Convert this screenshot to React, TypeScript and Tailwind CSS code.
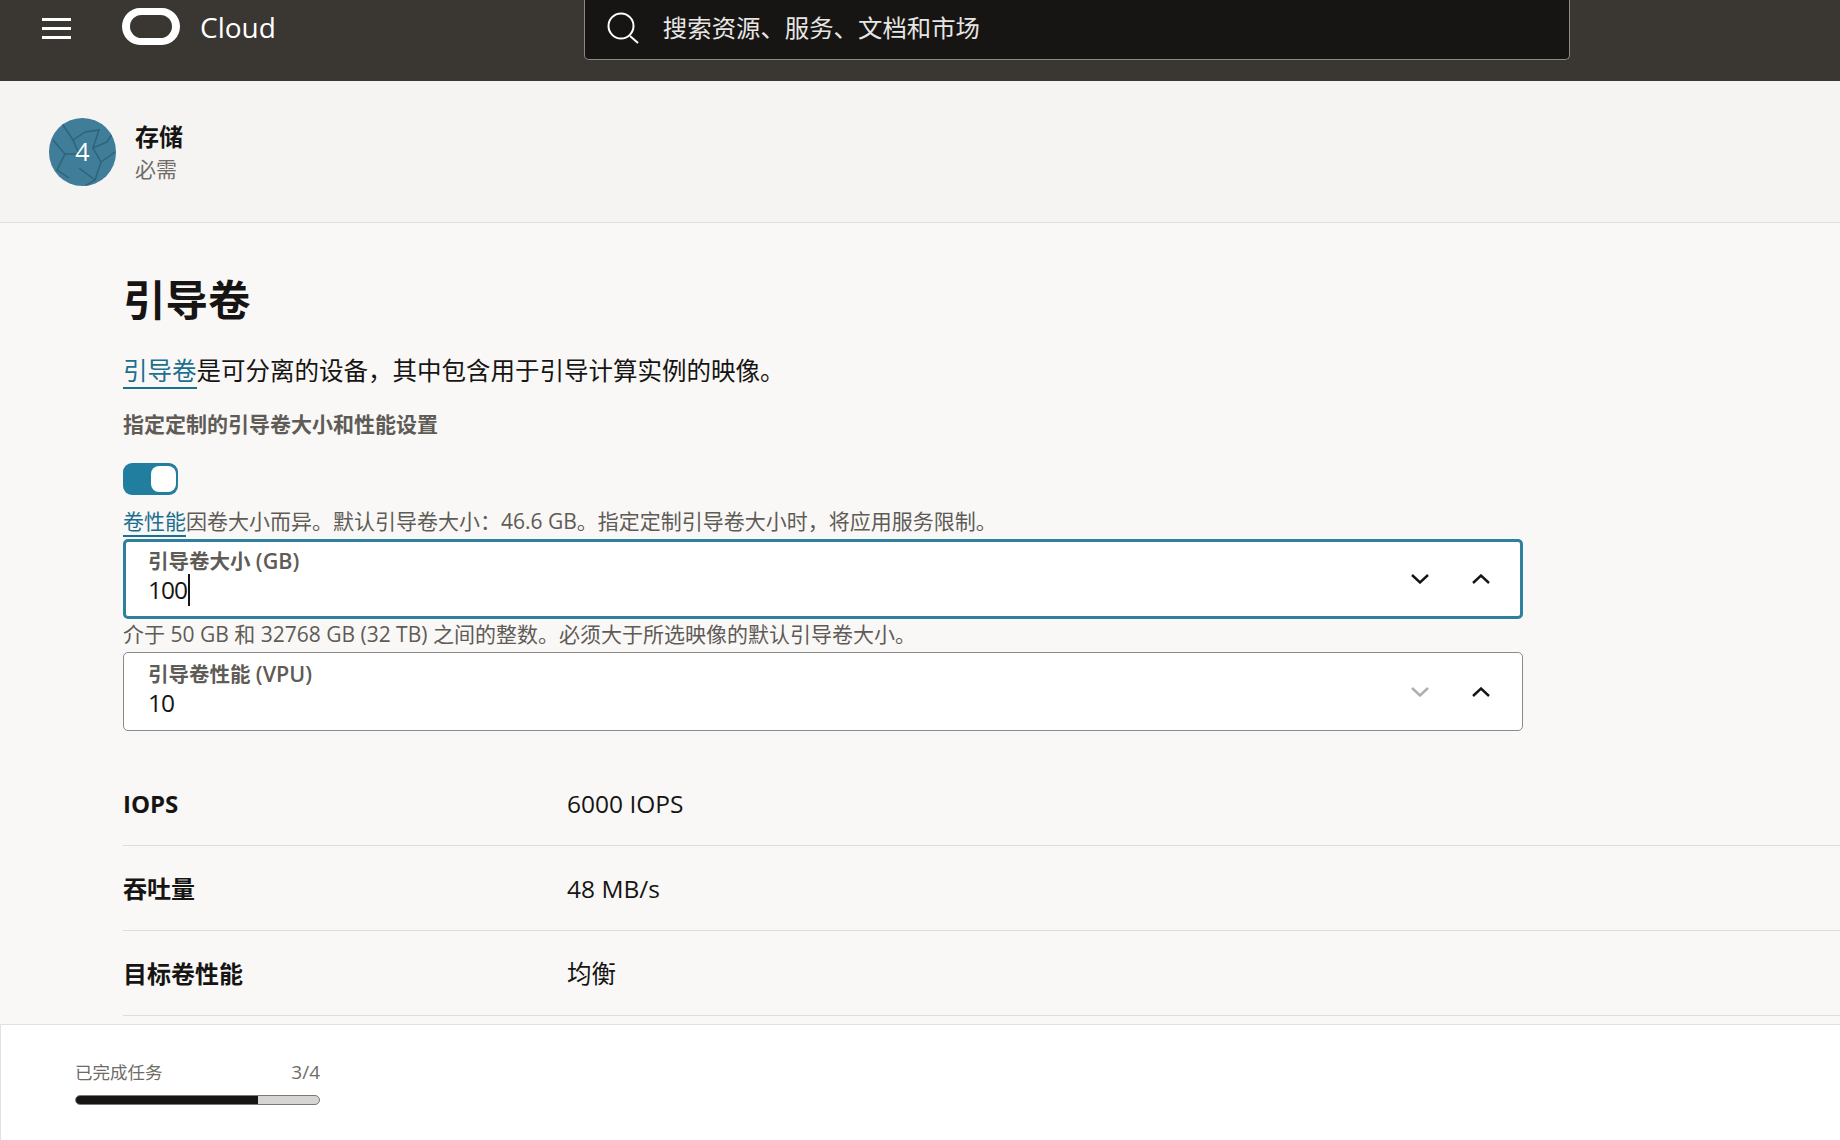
import React from "react";

const fontStack = { fontFamily: '"Open Sans", "Noto Sans CJK SC", sans-serif' };

const Chevron = ({ up = false, muted = false }: { up?: boolean; muted?: boolean }) => (
  <svg width="18" height="10" viewBox="0 0 18 10" fill="none" className={muted ? "text-[#b0aeab]" : "text-[#161513]"}>
    <path d={up ? "M1 9 L9 1.5 L17 9" : "M1 1 L9 8.5 L17 1"} stroke="currentColor" strokeWidth="2.4" />
  </svg>
);

const StepBadge = () => (
  <div className="relative flex h-[68px] w-[67px] shrink-0 items-center justify-center overflow-hidden rounded-full bg-[#3f7d99]">
    <svg className="absolute inset-0" width="67" height="68" viewBox="0 0 67 68" fill="none" stroke="#2f6379" strokeWidth="1.5">
      <path d="M12 4 L24 22 L36 14 L50 12 L44 30 L58 24 L66 12" />
      <path d="M4 22 L16 36 L8 52 L20 60" />
      <path d="M24 22 L30 36 L16 36" />
      <path d="M44 30 L52 44 L46 62 L36 68" />
      <path d="M52 44 L66 34" />
      <path d="M30 50 L46 62" />
    </svg>
    <span className="relative text-[25px] leading-none text-white">4</span>
  </div>
);

const NumberField = ({
  label,
  unit,
  value,
  focused = false,
  downMuted = false,
}: {
  label: string;
  unit: string;
  value: string;
  focused?: boolean;
  downMuted?: boolean;
}) => (
  <div
    className={`flex w-[1400px] items-center justify-between rounded-[5px] bg-white ${
      focused ? "h-[80px] border-[3px] border-[#2f7f9e] pl-[22px]" : "h-[79px] border border-[#8c8a87] pl-[24px]"
    }`}
  >
    <div className={`flex flex-col self-start ${focused ? "pt-[5px]" : "pt-[7px]"}`}>
      <span className="text-[20.5px] leading-[28px] font-semibold text-[#5f5b56]">
        {label} <span className="text-[21.5px] font-semibold">{unit}</span>
      </span>
      <span className="flex h-[29px] items-center text-[24.5px] leading-[29px] tracking-[-1px] text-[#161513]">
        {value}
        {focused && <span className="ml-[1px] inline-block h-[32px] w-[2px] shrink-0 bg-[#161513]" />}
      </span>
    </div>
    <div className={`flex items-center gap-[43px] ${focused ? "pr-[30px]" : "pr-[32px]"}`}>
      <Chevron muted={downMuted} />
      <Chevron up />
    </div>
  </div>
);

const specs = [
  { label: "IOPS", value: "6000 IOPS" },
  { label: "吞吐量", value: "48 MB/s" },
  { label: "目标卷性能", value: "均衡" },
];

export default function App() {
  return (
    <div className="flex h-[1140px] w-[1840px] flex-col overflow-hidden bg-[#f9f8f6]" style={fontStack}>
      {/* Top bar */}
      <header className="flex h-[81px] shrink-0 items-start bg-[#3a3632]">
        <div className="ml-[42px] mt-[18px] flex h-[21px] w-[29px] flex-col justify-between">
          <span className="h-[3px] bg-white" />
          <span className="h-[3px] bg-white" />
          <span className="h-[3px] bg-white" />
        </div>
        <svg className="ml-[51px] mt-[8px]" width="58" height="37" viewBox="0 0 58 37">
          <path
            fillRule="evenodd"
            fill="#fff"
            d="M18 0 H40 A18 18.5 0 0 1 40 37 H18 A18 18.5 0 0 1 18 0 Z M19.5 7 A11.5 11.5 0 0 0 19.5 30 H38.5 A11.5 11.5 0 0 0 38.5 7 Z"
          />
        </svg>
        <span className="ml-[20px] mt-[8px] text-[28px] leading-[38px] font-medium text-white">Cloud</span>
        <div className="ml-[308px] flex h-[60px] w-[986px] items-start rounded-b-[5px] border border-t-0 border-[#8c8a87] bg-[#161513]">
          <svg className="ml-[22px] mt-[12px]" width="32" height="32" viewBox="0 0 32 32" fill="none" stroke="#fff" strokeWidth="2">
            <circle cx="14" cy="14" r="12.5" />
            <path d="M23 24 L31 31" />
          </svg>
          <span className="ml-[24px] mt-[11px] text-[24.4px] leading-[34px] text-[#e8e6e3]">搜索资源、服务、文档和市场</span>
        </div>
      </header>

      {/* Step header */}
      <section className="flex h-[142px] shrink-0 items-center gap-[19px] border-b border-[#e0dedb] bg-[#f5f4f2] pl-[49px]">
        <StepBadge />
        <div className="flex flex-col pt-[2px]">
          <span className="text-[24px] leading-[32px] font-bold text-[#161513]">存储</span>
          <span className="text-[21px] leading-[32px] text-[#6f6c68]">必需</span>
        </div>
      </section>

      {/* Boot volume */}
      <main className="min-h-0 flex-1 overflow-hidden pl-[123px] pt-[48px]">
        <h1 className="text-[42.5px] leading-[58px] font-bold text-[#161513]">引导卷</h1>
        <p className="mt-[24px] text-[24.5px] leading-[36px] text-[#161513]">
          <a className="border-b-2 border-[#1c6f8f] text-[#1c6f8f]">引导卷</a>是可分离的设备，其中包含用于引导计算实例的映像。
        </p>
        <p className="mt-[20px] text-[21px] leading-[30px] font-semibold text-[#5f5b56]">指定定制的引导卷大小和性能设置</p>
        <div className="mt-[24px] flex h-[32px] w-[55px] items-center justify-end rounded-[9px] bg-[#227e9e] pr-[2px]">
          <span className="h-[26px] w-[25px] rounded-[8px] bg-white" />
        </div>
        <p className="mb-[3px] mt-[11px] text-[21px] leading-[30px] text-[#5f5b56]">
          <a className="border-b-2 border-[#1c6f8f] text-[#1c6f8f]">卷性能</a>因卷大小而异。默认引导卷大小：46.6 GB。指定定制引导卷大小时，将应用服务限制。
        </p>
        <NumberField label="引导卷大小" unit="(GB)" value="100" focused />
        <p className="mb-[3px] text-[21px] leading-[30px] text-[#5f5b56]">介于 50 GB 和 32768 GB (32 TB) 之间的整数。必须大于所选映像的默认引导卷大小。</p>
        <NumberField label="引导卷性能" unit="(VPU)" value="10" downMuted />
        <div className="mt-[30px]">
          {specs.map((row) => (
            <div key={row.label} className="flex h-[85px] items-center border-b border-[#dfddda] pt-[2px]">
              <span className="w-[444px] text-[24px] font-bold text-[#161513]">{row.label}</span>
              <span className="text-[24.5px] text-[#161513]">{row.value}</span>
            </div>
          ))}
        </div>
      </main>

      {/* Task progress */}
      <footer className="h-[116px] shrink-0 border-l border-t border-[#e4e2df] bg-white pl-[74px] pt-[34px]">
        <div className="w-[245px]">
          <div className="flex items-center justify-between text-[17.5px] leading-[26px] text-[#6f6c68]">
            <span>已完成任务</span>
            <span className="text-[19px]">3/4</span>
          </div>
          <div className="mt-[10px] h-[10px] overflow-hidden rounded-full border border-[#7a7875] bg-[#d6d5d3]">
            <div className="h-full w-[75%] bg-[#161513]" />
          </div>
        </div>
      </footer>
    </div>
  );
}
